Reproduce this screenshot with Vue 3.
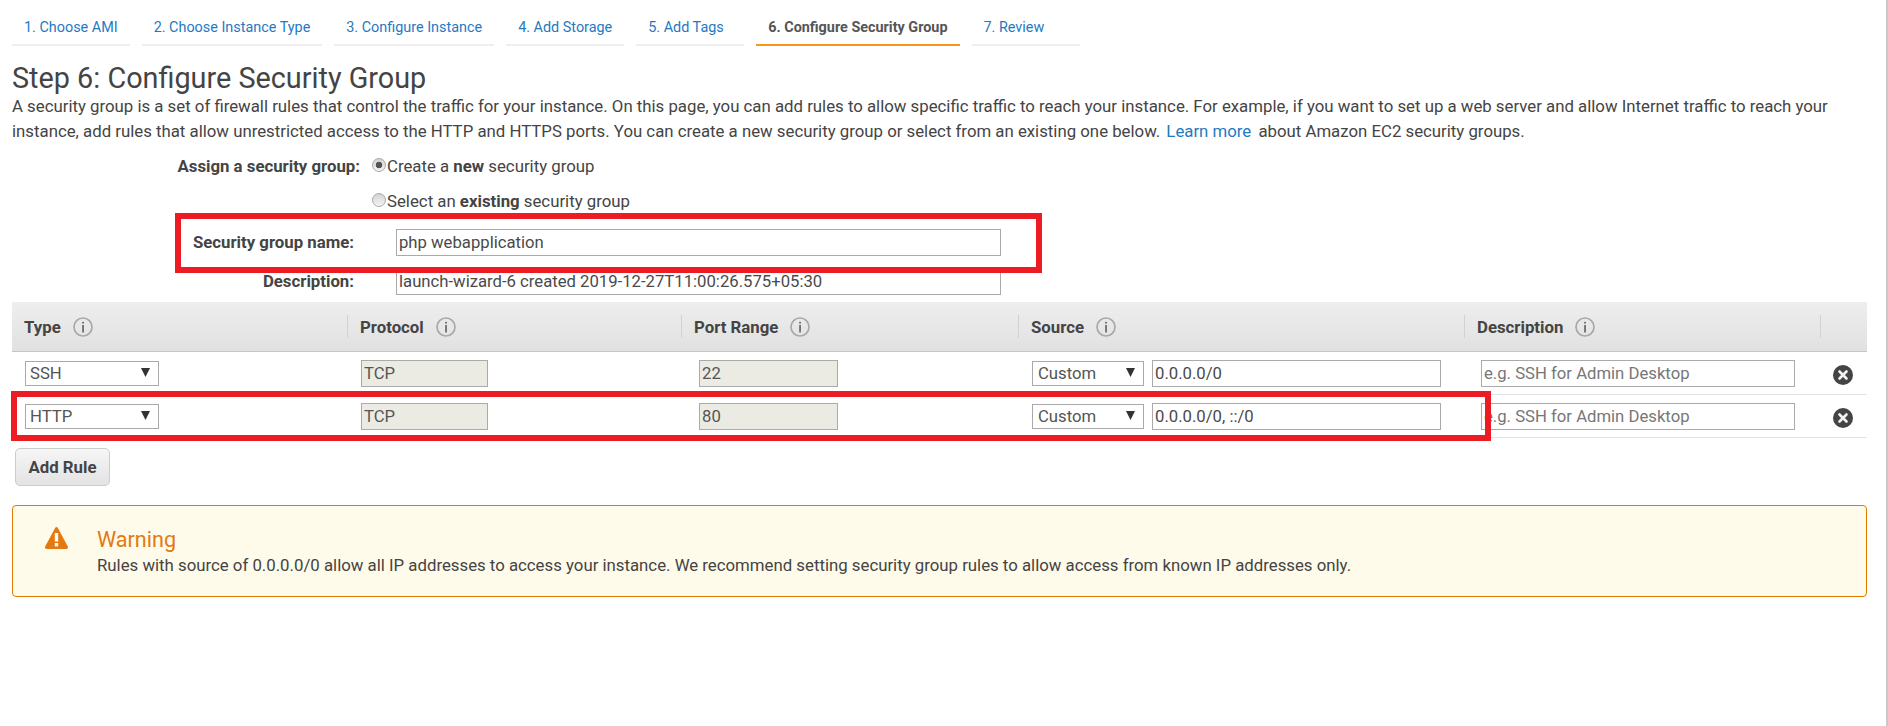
<template>
  <div class="page">
    <nav class="tabs">
      <a
        v-for="(t, i) in tabs"
        :key="t"
        class="tab"
        :class="{ active: i === 5 }"
      >{{ t }}</a>
    </nav>

    <h1 class="title">Step 6: Configure Security Group</h1>
    <p class="intro">
      A security group is a set of firewall rules that control the traffic for your instance. On this page, you can add rules to allow specific traffic to reach your instance. For example, if you want to set up a web server and allow Internet traffic to reach your instance, add rules that allow unrestricted access to the HTTP and HTTPS ports. You can create a new security group or select from an existing one below. <a class="learn">Learn more</a> about Amazon EC2 security groups.
    </p>

    <div class="assign">
      <div class="assign-label">Assign a security group:</div>
      <div class="assign-options">
        <label class="radio-row"><input type="radio" name="sg" checked />Create a&nbsp;<b>new</b>&nbsp;security group</label>
        <label class="radio-row"><input type="radio" name="sg" />Select an&nbsp;<b>existing</b>&nbsp;security group</label>
      </div>
    </div>

    <div class="field name-field">
      <label>Security group name:</label>
      <input class="text" value="php webapplication" />
    </div>
    <div class="field desc-field">
      <label>Description:</label>
      <input class="text" value="launch-wizard-6 created 2019-12-27T11:00:26.575+05:30" />
    </div>

    <div class="rules">
      <div class="row head">
        <div v-for="h in headers" :key="h" class="th">
          <span>{{ h }}</span>
          <svg class="info" width="20" height="20" viewBox="0 0 20 20">
            <circle cx="10" cy="10" r="9" fill="none" stroke="#a8a8a8" stroke-width="1.700" />
            <rect x="9.200" y="8" width="1.700" height="7.500" fill="#666" />
            <rect x="9.200" y="4.800" width="1.700" height="1.800" fill="#666" />
          </svg>
        </div>
        <div class="th"></div>
      </div>
      <div v-for="r in rules" :key="r.type" class="row body">
        <div class="td">
          <div class="sel type-sel">
            <select><option>{{ r.type }}</option></select>
            <svg class="arrow" width="9" height="9" viewBox="0 0 9 9"><path d="M0 0h9L4.500 9z" fill="#333" /></svg>
          </div>
        </div>
        <div class="td"><input class="text locked proto" readonly value="TCP" /></div>
        <div class="td"><input class="text locked port" readonly :value="r.port" /></div>
        <div class="td source">
          <div class="sel src-sel">
            <select><option>Custom</option></select>
            <svg class="arrow" width="9" height="9" viewBox="0 0 9 9"><path d="M0 0h9L4.500 9z" fill="#333" /></svg>
          </div>
          <input class="text cidr" :value="r.cidr" />
        </div>
        <div class="td"><input class="text note" placeholder="e.g. SSH for Admin Desktop" /></div>
        <div class="td del">
          <svg width="20" height="20" viewBox="0 0 20 20">
            <circle cx="10" cy="10" r="10" fill="#444" />
            <path d="M6.500 6.500l7 7M13.500 6.500l-7 7" stroke="#f2f2f2" stroke-width="2.600" stroke-linecap="round" />
          </svg>
        </div>
      </div>
    </div>

    <button class="add-rule">Add Rule</button>

    <div class="warning">
      <svg class="warn-icon" width="23" height="22" viewBox="0 0 23 22">
        <path d="M11.500 0c.6 0 1.100.3 1.400.9L22.800 19.500c.5 1.200-.2 2.500-1.500 2.500H1.700c-1.300 0-2-1.300-1.500-2.500L10.100.9c.3-.6.8-.9 1.400-.9z" fill="#e47911" />
        <rect x="9.800" y="6" width="3.400" height="8.500" fill="#fffbea" />
        <rect x="9.800" y="16" width="3.400" height="3.400" fill="#fffbea" />
      </svg>
      <div class="warn-body">
        <div class="warn-title">Warning</div>
        <div class="warn-text">Rules with source of 0.0.0.0/0 allow all IP addresses to access your instance. We recommend setting security group rules to allow access from known IP addresses only.</div>
      </div>
    </div>

    <!-- red annotation boxes drawn over the screenshot -->
    <div class="mark mark-name"></div>
    <div class="mark mark-rule"></div>
    <div class="scrollbar"></div>
  </div>
</template>

<script setup>
const tabs = [
  '1. Choose AMI',
  '2. Choose Instance Type',
  '3. Configure Instance',
  '4. Add Storage',
  '5. Add Tags',
  '6. Configure Security Group',
  '7. Review'
]

const headers = ['Type', 'Protocol', 'Port Range', 'Source', 'Description']

const rules = [
  { type: 'SSH', port: '22', cidr: '0.0.0.0/0' },
  { type: 'HTTP', port: '80', cidr: '0.0.0.0/0, ::/0' }
]
</script>

<style>
html,
body {
  margin: 0;
  background: #fff;
  overflow: hidden;
}
</style>

<style scoped>
* {
  box-sizing: border-box;
}

.page {
  position: relative;
  width: 1888px;
  height: 726px;
  overflow: hidden;
  padding: 0 21px 0 12px;
  font-family: Roboto, sans-serif;
  font-size: 16.8px;
  color: #444;
}

.tabs {
  display: flex;
  gap: 12px;
  padding-top: 14px;
}

.tab {
  height: 32px;
  min-width: 108px;
  padding: 0 12px;
  font-size: 14.4px;
  line-height: 28px;
  color: #1f7ac2;
  border-bottom: 2px solid #eee;
}

.tab.active {
  font-weight: 700;
  color: #555;
  border-bottom-color: #f7981d;
}

.title {
  margin: 16px 0 0;
  font-size: 28.8px;
  font-weight: 400;
  line-height: 32px;
  color: #444;
}

.intro {
  margin: 0;
  line-height: 25px;
  width: 1830px;
}

.learn {
  color: #1f7ac2;
  margin: 0 3px 0 2px;
}

.assign {
  display: flex;
  margin-top: 7px;
}

.assign-label {
  width: 348px;
  font-weight: 700;
  text-align: right;
  line-height: 30px;
}

.assign-options {
  padding-left: 12px;
}

.radio-row {
  display: flex;
  align-items: center;
  height: 30px;
  margin-bottom: 5px;
  white-space: pre;
}

.radio-row:last-child {
  margin-bottom: 0;
}

.radio-row input {
  width: 14px;
  height: 14px;
  margin: 0 1px 3px 0;
  appearance: none;
  border: 1px solid #a8a8a8;
  border-radius: 50%;
  background: linear-gradient(#d4d4d4, #f4f4f4);
}

.radio-row input:checked {
  background: radial-gradient(circle, #555 0 3px, transparent 3.6px), linear-gradient(#d4d4d4, #f4f4f4);
}

.field {
  display: flex;
  align-items: center;
  height: 27px;
}

.field label {
  width: 342px;
  margin: 0 42px 2px 0;
  text-align: right;
  font-weight: 700;
}

.field .text {
  width: 605px;
}

.name-field {
  margin-top: 13px;
}

.desc-field {
  margin-top: 12px;
}

.text {
  height: 27px;
  padding: 0 2px;
  border: 1px solid #aaa;
  background: #fff;
  font: 16.7px Roboto, sans-serif;
  color: #4a4a4a;
  outline: none;
}

.text::placeholder {
  color: #777;
  opacity: 1;
}

.rules {
  margin-top: 7px;
}

.row {
  display: grid;
  grid-template-columns: 335px 334px 337px 446px 356px 47px;
}

.head {
  height: 50px;
  align-items: center;
  background: linear-gradient(#eeeeee, #e1e1e1);
  border-bottom: 1px solid #c6c6c6;
}

.th {
  display: flex;
  align-items: center;
  gap: 12px;
  height: 23px;
  padding-left: 12px;
  font-weight: 700;
  border-left: 1px solid #d2d2d2;
}

.th:first-child {
  border-left: 0;
}

.info {
  flex: none;
}

.body {
  height: 43px;
  align-items: center;
  border-bottom: 1px solid #e3e3e3;
}

.td {
  display: flex;
  align-items: center;
  padding-left: 14px;
}

.td:first-child {
  padding-left: 13px;
}

.sel {
  position: relative;
  height: 25px;
}

.sel select {
  width: 100%;
  height: 100%;
  padding: 0 5px;
  appearance: none;
  border: 1px solid #aaa;
  border-radius: 0;
  background: #fff;
  font: 16.7px Roboto, sans-serif;
  color: #555;
  outline: none;
}

.type-sel select {
  padding-left: 4px;
}

.arrow {
  position: absolute;
  right: 9px;
  top: 7px;
  pointer-events: none;
}

.type-sel {
  width: 134px;
}

.src-sel {
  width: 112px;
}

.locked {
  background: #ebebe4;
  color: #555;
}

.proto {
  width: 127px;
}

.port {
  width: 139px;
  margin-left: 4px;
}

.source {
  gap: 8px;
}

.cidr {
  width: 289px;
}

.note {
  width: 314px;
  margin-left: 3px;
}

.del {
  padding: 3px 0 0 13px;
}

.add-rule {
  display: block;
  width: 95px;
  height: 38px;
  margin: 10px 0 0 3px;
  padding: 0;
  border: 1px solid #ccc;
  border-radius: 5px;
  background: linear-gradient(#f6f6f6, #e3e3e3);
  font: 700 16.8px Roboto, sans-serif;
  color: #444;
}

.warning {
  display: flex;
  height: 92px;
  margin-top: 19px;
  padding: 21px 0 0 32px;
  background: #fffbea;
  border: 1px solid #e07b00;
  border-radius: 4px;
}

.warn-icon {
  flex: none;
  margin-right: 29px;
}

.warn-title {
  font-size: 21.6px;
  line-height: 26px;
  color: #e47911;
}

.warn-text {
  line-height: 25px;
}

.mark {
  position: absolute;
  border: 6px solid #ed1c24;
  pointer-events: none;
}

.mark-name {
  left: 175px;
  top: 213px;
  width: 867px;
  height: 60px;
}

.mark-rule {
  left: 11px;
  top: 391px;
  width: 1480px;
  height: 50px;
}

.scrollbar {
  position: absolute;
  right: 0;
  top: 0;
  width: 2px;
  height: 100%;
  background: #c9c9c9;
}
</style>
